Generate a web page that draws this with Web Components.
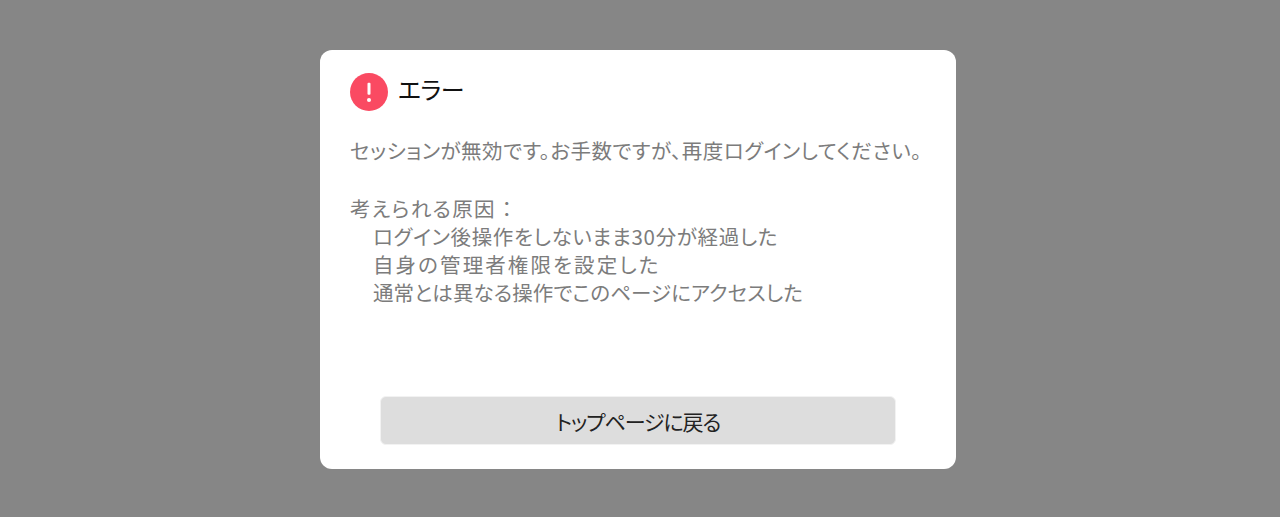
<!DOCTYPE html>
<html lang="ja">
<head>
<meta charset="utf-8">
<style>
html, body { margin: 0; height: 100%; }
body { background: #868686; font-family: "Noto Sans CJK JP", "Noto Sans", sans-serif; }
</style>
</head>
<body>
<error-dialog>
  <span slot="title">エラー</span>
  <span slot="message">セッションが無効です。お手数ですが、再度ログインしてください。</span>
  <span slot="cause-title">考えられる原因 ：</span>
  <cause-item style="--track: .67px">ログイン後操作をしないまま30分が経過した</cause-item>
  <cause-item style="--track: 2.1px">自身の管理者権限を設定した</cause-item>
  <cause-item style="--track: .1px">通常とは異なる操作でこのページにアクセスした</cause-item>
  <span slot="action">トップページに戻る</span>
</error-dialog>
<script>
class CauseItem extends HTMLElement {
  constructor() {
    super();
    this.attachShadow({ mode: "open" });
    // --track: espaciado propio de cada línea
    this.shadowRoot.innerHTML = `
      <style>:host { display: block; padding-left: 23px; height: 28px; line-height: 28px; letter-spacing: var(--track, 0); }</style>
      <slot></slot>`;
  }
}
customElements.define("cause-item", CauseItem);

class ErrorDialog extends HTMLElement {
  constructor() {
    super();
    this.attachShadow({ mode: "open" });
    this.shadowRoot.innerHTML = `
      <style>
        :host { display: flex; justify-content: center; padding: 50px 4px 0 0; font-feature-settings: "palt"; }
        .card { box-sizing: border-box; width: 636px; height: 419px; background: #fff; border-radius: 12px;
          padding: 23px 30px 24px; display: flex; flex-direction: column; }
        .head { display: flex; gap: 10px; height: 38px; font-size: 24px; line-height: 32px; letter-spacing: -.5px; color: #111; }
        .head svg { width: 38px; height: 38px; flex: none; }
        .msg { margin-top: 25px; font-size: 20.5px; line-height: 28px; letter-spacing: .5px; color: #7c7c7c; white-space: nowrap; }
        .causes { margin-top: 30px; font-size: 20.5px; line-height: 28px; color: #7c7c7c; white-space: nowrap; }
        .cause-title { letter-spacing: 1.3px; }
        button { margin: auto 30px 0; flex: none; height: 49px; border: 1px solid #f2f2f2; border-radius: 6px; background: #ddd;
          color: #222; font: inherit; font-size: 21px; letter-spacing: -1.1px; padding: 0; }
      </style>
      <div class="card">
        <div class="head">
          <svg viewBox="0 0 38 38"><circle cx="19" cy="19" r="19" fill="#fa4a62"/><rect x="17.5" y="9.7" width="3" height="12" rx="1" fill="#fff"/><circle cx="19" cy="27" r="2" fill="#fff"/></svg>
          <slot name="title"></slot>
        </div>
        <div class="msg"><slot name="message"></slot></div>
        <div class="causes"><div class="cause-title"><slot name="cause-title"></slot></div><slot></slot></div>
        <button><slot name="action"></slot></button>
      </div>`;
  }
}
customElements.define("error-dialog", ErrorDialog);
</script>
</body>
</html>
